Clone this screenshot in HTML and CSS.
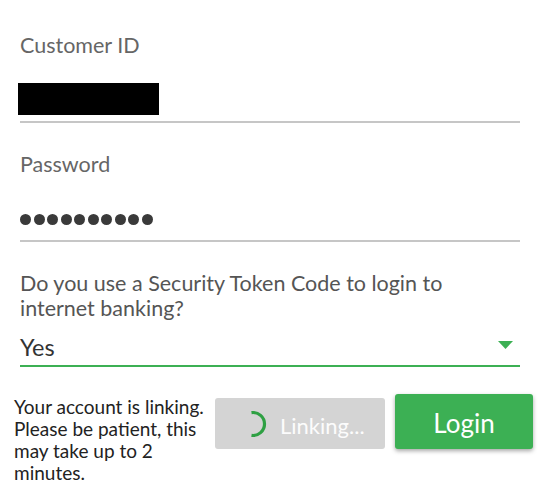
FILE: index.html
```html
<!DOCTYPE html>
<html lang="en">
  <head>
    <meta charset="UTF-8" />
    <meta name="viewport" content="width=device-width, initial-scale=1" />
    <title>Link Account</title>
    <link rel="stylesheet" href="styles.css">
  </head>
  <body>
    <form class="link-form" name="linkForm">
      <div class="field field-first">
        <label class="field-label">Customer ID</label>
        <div class="field-value">
          <span class="redacted"></span>
        </div>
      </div>

      <div class="field">
        <label class="field-label">Password</label>
        <div class="field-value password-value">
          <span class="dot"></span><span class="dot"></span><span class="dot"></span><span class="dot"></span><span class="dot"></span><span class="dot"></span><span class="dot"></span><span class="dot"></span><span class="dot"></span><span class="dot"></span>
        </div>
      </div>

      <div class="field">
        <label class="field-label question">Do you use a Security Token Code to login to internet banking?</label>
        <div class="select-value">
          <span class="select-text">Yes</span>
          <svg class="caret" width="15" height="8" viewBox="0 0 15 8">
            <polygon points="0,0 15,0 7.5,8" fill="#3cb054" />
          </svg>
        </div>
      </div>
    </form>

    <div class="actions">
      <p class="linking-note">Your account is linking. Please be patient, this may take up to 2 minutes.</p>
      <button type="button" class="btn-linking" disabled>
        <svg class="spinner" width="28" height="28" viewBox="0 0 28 28">
          <path d="M12.5 2.6 A11.5 11.5 0 1 1 12.5 25.4" fill="none" stroke="#2ea043" stroke-width="3.2" />
        </svg>
        <span>Linking...</span>
      </button>
      <button type="button" class="btn-login">Login</button>
    </div>
  </body>
</html>
```

FILE: styles.css
```css
/* General Body Styles */
body {
  margin: 0;
  font-family: "Lato", "Open Sans", sans-serif;
  background: #fff;
  color: #333;
}

/* Form */
.link-form {
  width: 500px;
  padding: 0 27px 0 20px;
}

.field {
  padding-top: 29px;
}

.field-first {
  padding-top: 33px;
}

.field-label {
  display: block;
  font-size: 21.5px;
  line-height: 24px;
  color: #666;
}

.field-label.question {
  line-height: 25px;
  color: #555;
}

.field-value {
  height: 66px;
  border-bottom: 2px solid #c6c6c6;
  display: flex;
  align-items: flex-end;
  box-sizing: border-box;
}

.redacted {
  display: block;
  width: 141px;
  height: 32px;
  margin: 0 0 6px -2px;
  background: #000;
}

.password-value {
  align-items: center;
  padding-top: 22px;
  gap: 2.5px;
}

.dot {
  width: 11px;
  height: 11px;
  border-radius: 50%;
  background: #3a3a3a;
}

/* Select */
.select-value {
  display: flex;
  align-items: flex-end;
  justify-content: space-between;
  height: 46px;
  border-bottom: 2px solid #3cb054;
  box-sizing: border-box;
  padding: 0 7px 4px 0;
}

.select-text {
  font-size: 23.5px;
  line-height: 28px;
  color: #333;
}

.caret {
  margin-bottom: 12px;
}

/* Bottom actions */
.actions {
  display: flex;
  align-items: flex-start;
  padding: 27px 0 0 14px;
}

.linking-note {
  width: 198px;
  margin: 2px 0 0;
  font-size: 19px;
  line-height: 22px;
  color: #222;
}

button {
  font-family: "Lato", "Open Sans", sans-serif;
  border: none;
  border-radius: 3px;
}

.btn-linking {
  width: 170px;
  height: 51px;
  margin: 4px 0 0 3px;
  background: #d4d4d4;
  color: #fcfcfc;
  font-size: 22px;
  display: flex;
  align-items: center;
  gap: 13px;
  padding: 4px 0 0 24px;
}

.btn-linking .spinner {
  margin-top: -4px;
}

.btn-login {
  width: 138px;
  height: 55px;
  margin-left: 10px;
  background: #3cb054;
  color: #fff;
  font-size: 26px;
  padding-top: 3px;
  box-shadow: 0 2px 4px rgba(0, 0, 0, 0.35);
  cursor: pointer;
}
```
